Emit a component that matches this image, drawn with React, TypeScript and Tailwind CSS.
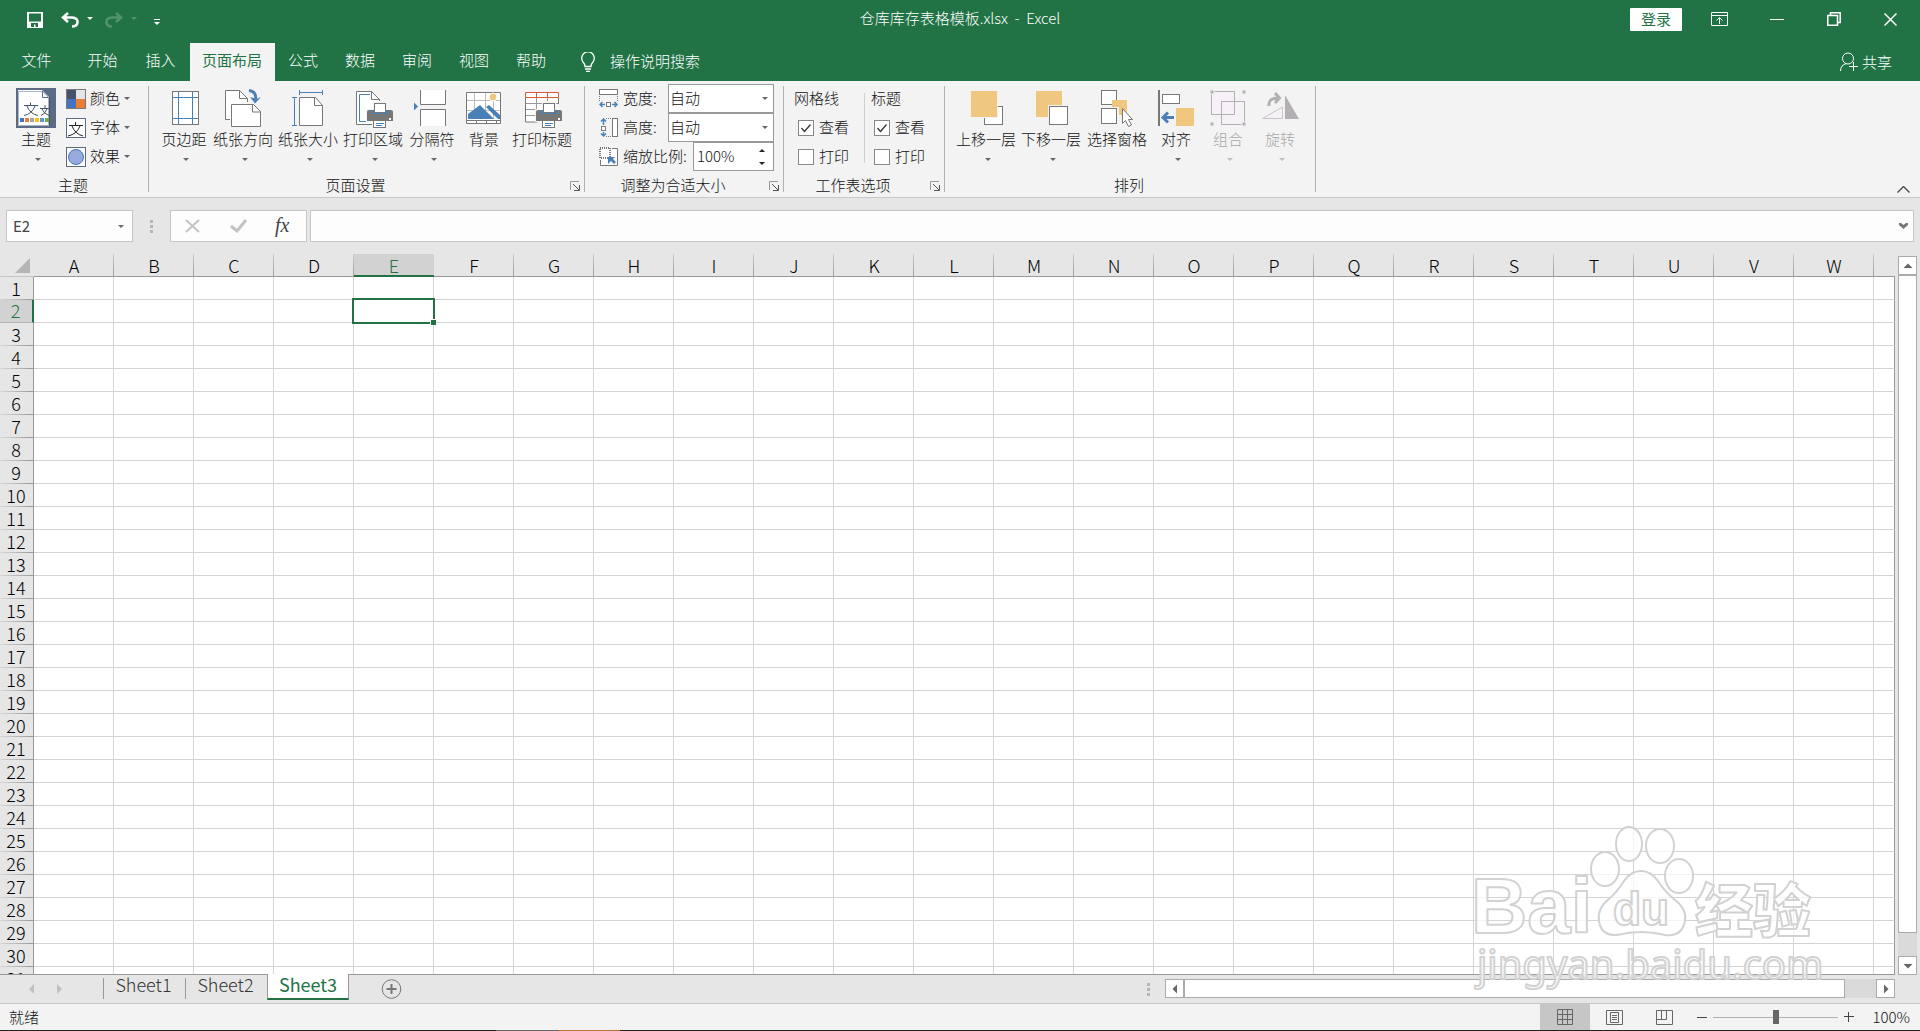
import React, { useState } from 'react'

type IconProps = { children: React.ReactNode, size?: string, view?: string }

const Icon = ({ children, size = 'h-10 w-10', view = '0 0 40 40' }: IconProps) => (
  <svg className={`${size} shrink-0`} viewBox={view} fill="none" stroke="#777" aria-hidden="true">{children}</svg>
)

const Caret = ({ className = 'text-[#666]' }: { className?: string }) => (
  <svg className={`h-[3px] w-[6px] shrink-0 ${className}`} viewBox="0 0 6 3" aria-hidden="true">
    <path d="M0 0h6L3 3z" fill="currentColor" />
  </svg>
)

const Printer = () => (
  <g>
    <path d="M20 13h14v8h7v13h-6v6H19v-6h-6V21h7z" fill="#f3f3f3" stroke="none" />
    <path d="M16 22h22a2 2 0 0 1 2 2v9H14v-9a2 2 0 0 1 2-2z" fill="#777" stroke="none" />
    <rect x="21.5" y="15.5" width="11" height="9" fill="#fff" />
    <path d="M19 22h2v3h12v-3h2v4H19z" fill="#4a80b8" stroke="none" />
    <rect x="20.5" y="32.5" width="12" height="7" fill="#fff" />
    <path d="M23 35.5h8M23 37.5h6" stroke="#4a80b8" />
    <path d="M36 30h2v2h-2z" fill="#fff" stroke="none" />
  </g>
)

const ThemeIcon = () => (
  <Icon>
    <rect x="1" y="1" width="38" height="38" fill="#fff" stroke="#5b6b86" strokeWidth="2" />
    <path d="M26 2h12v36h-5V9z" fill="#5b6b86" stroke="none" />
    <path d="M2.5 37.5v-34h24l6 6v28z" fill="#fff" stroke="#a9b6c9" />
    <path d="M26.5 3v6.5h6" stroke="#5b6b86" />
    <path d="M33.5 9v29" stroke="#44546a" />
    <path d="M14.5 14.5v3M8 17.5h14M11 18q3 8 11 9.5M19 18q-3 8-11 9.5M29 17v3M24 20.5h9M26 21q2 5 7 6.5M31 21q-2 5-6 6.5" stroke="#44546a" />
    <g stroke="none">
      <path d="M4 30h4v4H4z" fill="#4472c4" />
      <path d="M9 30h4v4H9z" fill="#ed7d31" />
      <path d="M14 30h4v4h-4z" fill="#a5a5a5" />
      <path d="M19 30h4v4h-4z" fill="#ffc000" />
      <path d="M24 30h4v4h-4z" fill="#5b9bd5" />
      <path d="M29 30h4v4h-4z" fill="#70ad47" />
    </g>
  </Icon>
)

const MarginsIcon = () => (
  <Icon>
    <rect x="8.5" y="3.5" width="26" height="33" fill="#fff" />
    <path d="M14.5 4v32M28.5 4v32M9 9.5h25M9 30.5h25" stroke="#4a80b8" />
  </Icon>
)

const OrientationIcon = () => (
  <Icon>
    <path d="M7 31.5H2.5v-29h14l8 8V14" fill="#fff" />
    <path d="M7 31V15h17v-4h-8V3H3v28z" fill="#fff" stroke="none" />
    <path d="M16.5 2.5v8h8" />
    <path d="M8.5 16.5h22l7 7v15h-29z" fill="#fff" />
    <path d="M29.5 16.5v7.5h8" />
    <path d="M26 2.5q8 1 6.5 10" stroke="#4a80b8" strokeWidth="3" />
    <path d="M27 9l5 6.5L38 9l-4.5 2z" fill="#4a80b8" stroke="none" />
  </Icon>
)

const SizeIcon = () => (
  <Icon>
    <path d="M11.5 9.5h16l7 8v20h-23z" fill="#fff" />
    <path d="M26.5 9.5v8h8" />
    <path d="M11.5 2v5M34.5 2v5M11 4.5h24M4 9.5h5M4 37.5h5M6.5 9v29" stroke="#4a80b8" />
  </Icon>
)

const PrintAreaIcon = () => (
  <Icon>
    <path d="M3.5 3.5h15l8 8v25h-23z" fill="#fff" />
    <path d="M18.5 3.5v8h8" />
    <path d="M17 6.5H6.5v27H15" stroke="#4a80b8" />
    <Printer />
  </Icon>
)

const BreaksIcon = () => (
  <Icon>
    <path d="M8.5 2v14.5h25V2M8.5 38V21.5h25V38" fill="#fff" />
    <path d="M2 14.5v8l4-4z" fill="#4a80b8" stroke="none" />
  </Icon>
)

const BackgroundIcon = () => (
  <Icon>
    <path d="M2.5 4.5h34v31h-34z" fill="#fff" />
    <path d="M3 12.5h33M3 22.5h33M10.5 5v26M21.5 5v26M29.5 5v26" stroke="#bbb" />
    <circle cx="29" cy="9" r="4" fill="#efc77e" stroke="#fff" />
    <path d="M4 31v-5l12-9L30 31zM22 19l3-2 11 10v4h-2z" fill="#4a80b8" stroke="none" />
    <path d="M2 32.5h35M12.5 33v2M22.5 33v2M32.5 33v2" />
  </Icon>
)

const PrintTitlesIcon = () => (
  <Icon>
    <path d="M3.5 10v24h12M36.5 10v6" fill="#fff" />
    <path d="M4 10h32v6H22v17H4z" fill="#fff" stroke="none" />
    <path d="M4 15.5h32M4 21.5h16M4 27.5h11M14.5 10v22M25.5 10v4" stroke="#999" />
    <path d="M3.5 4.5h33v5h-33zM14.5 4v6M25.5 4v6" stroke="#d8593a" fill="#fff" />
    <Printer />
  </Icon>
)

const ForwardIcon = () => (
  <Icon>
    <rect x="18.5" y="18.5" width="18" height="18" fill="#fff" />
    <path d="M4 2h28v28H4z" fill="#f3f3f3" stroke="none" />
    <path d="M5 3h26v26H5z" fill="#efc77e" stroke="none" />
  </Icon>
)

const BackwardIcon = () => (
  <Icon>
    <path d="M5 3h26v26H5z" fill="#efc77e" stroke="none" />
    <rect x="17" y="17" width="21" height="21" fill="#f3f3f3" stroke="none" />
    <rect x="18.5" y="18.5" width="18" height="18" fill="#fff" />
  </Icon>
)

const SelectionIcon = () => (
  <Icon>
    <rect x="4.5" y="2.5" width="15" height="14" fill="#fff" />
    <path d="M15 12h15v15H15z" fill="#efc77e" stroke="none" />
    <rect x="3" y="19" width="19" height="19" fill="#f3f3f3" stroke="none" />
    <rect x="4.5" y="20.5" width="15" height="15" fill="#fff" />
    <path d="M25.5 20.5v15l3-3 3 6 3-1.5-3-5.5h4z" fill="#fff" />
  </Icon>
)

const AlignIcon = () => (
  <Icon>
    <path d="M3 2v36" strokeWidth="2" />
    <rect x="6.5" y="6.5" width="17" height="9" fill="#fff" />
    <path d="M20 20h18v18H20z" fill="#efc77e" stroke="none" />
    <path d="M18 29.5H8M12 24.5l-5 5 5 5" stroke="#4a80b8" strokeWidth="3" />
  </Icon>
)

const GroupIcon = () => (
  <Icon>
    <g stroke="#b3b0b3" fill="#f6f1f6">
      <rect x="3.5" y="3.5" width="23" height="23" />
      <rect x="13.5" y="13.5" width="23" height="23" />
      <path d="M26.5 13v13.5H13" fill="none" />
    </g>
    <path d="M2 2h4v4H2zM34 2h4v4h-4zM2 34h4v4H2zM34 34h4v4h-4z" fill="#b3b0b3" stroke="#f3f3f3" />
  </Icon>
)

const RotateIcon = () => (
  <Icon>
    <path d="M25 7v24h14z" fill="#b3b0b3" stroke="none" />
    <path d="M22.5 19v11.5H2.5z" fill="#f6f1f6" stroke="#c9c4c9" />
    <path d="M9 18q-1-8 9-8M15 5l4.5 5-4.5 5" stroke="#b3b0b3" strokeWidth="3" />
  </Icon>
)

const pageSetup = [
  { label: '页边距', icon: <MarginsIcon />, width: 'w-[54px]', menu: true },
  { label: '纸张方向', icon: <OrientationIcon />, width: 'w-[64px]', menu: true },
  { label: '纸张大小', icon: <SizeIcon />, width: 'w-[66px]', menu: true },
  { label: '打印区域', icon: <PrintAreaIcon />, width: 'w-[64px]', menu: true },
  { label: '分隔符', icon: <BreaksIcon />, width: 'w-[54px]', menu: true },
  { label: '背景', icon: <BackgroundIcon />, width: 'w-[50px]' },
  { label: '打印标题', icon: <PrintTitlesIcon />, width: 'w-[66px]' },
]

const arrange = [
  { label: '上移一层', icon: <ForwardIcon />, width: 'w-[66px]', menu: true },
  { label: '下移一层', icon: <BackwardIcon />, width: 'w-[64px]', menu: true },
  { label: '选择窗格', icon: <SelectionIcon />, width: 'w-[68px]' },
  { label: '对齐', icon: <AlignIcon />, width: 'w-[50px]', menu: true },
  { label: '组合', icon: <GroupIcon />, width: 'w-[54px]', menu: true, disabled: true },
  { label: '旋转', icon: <RotateIcon />, width: 'w-[50px]', menu: true, disabled: true },
]

type BigButtonProps = { label: string, icon: React.ReactNode, width: string, menu?: boolean, disabled?: boolean }

const BigButton = ({ label, icon, width, menu, disabled }: BigButtonProps) => (
  <button disabled={disabled} className={`${width} flex flex-col items-center pt-1 whitespace-nowrap ${disabled ? 'text-[#a8a8a8]' : 'text-[#111]'}`}>
    {icon}
    <span className="h-6 leading-[22px]">{label}</span>
    {menu && <span className="pt-[6px] pl-1"><Caret className={disabled ? 'text-[#c0c0c0]' : 'text-[#666]'} /></span>}
  </button>
)

type GroupProps = { title: string, width: string, launcher?: boolean, children: React.ReactNode }

const Group = ({ title, width, launcher, children }: GroupProps) => (
  <section className={`${width} flex shrink-0 flex-col`}>
    <div className="flex h-[94px]">{children}</div>
    <div className="flex h-5 items-center">
      <h2 className={`flex-1 text-center leading-5 ${launcher ? 'pr-2' : 'pr-[2px]'}`}>{title}</h2>
      {launcher && (
        <button aria-label={title} className="mt-[2px] mr-1">
          <svg className="h-[10px] w-[10px]" viewBox="0 0 10 10" fill="none" stroke="#555" aria-hidden="true">
            <path d="M.5 9V.5H9" stroke="#999" />
            <path d="M3 3l6 6M9.5 4v5.5H4" />
          </svg>
        </button>
      )}
    </div>
  </section>
)

const Divider = () => <div className="my-[5px] w-px shrink-0 bg-[#b1b1b1]" />

const themeItems = [
  {
    label: '颜色',
    icon: (
      <Icon size="h-5 w-5" view="0 0 20 20">
        <g stroke="none">
          <path d="M1 1h9v9H1z" fill="#44546a" /><path d="M10 1h9v9h-9z" fill="#e7e6e6" />
          <path d="M1 10h9v9H1z" fill="#4472c4" /><path d="M10 10h9v9h-9z" fill="#ed7d31" />
        </g>
        <rect x=".5" y=".5" width="19" height="19" />
      </Icon>
    ),
  },
  {
    label: '字体',
    icon: (
      <Icon size="h-5 w-5" view="0 0 20 20">
        <rect x=".5" y=".5" width="19" height="19" fill="#fff" stroke="#5b6b86" />
        <path d="M9.5 4v3M3 7.5h14M6 8q3 8 11 10M14 8q-3 8-12 10" stroke="#222" />
      </Icon>
    ),
  },
  {
    label: '效果',
    icon: (
      <Icon size="h-5 w-5" view="0 0 20 20">
        <rect x=".5" y=".5" width="19" height="19" fill="#fff" stroke="#5b6b86" />
        <circle cx="10" cy="10" r="7.5" fill="#98abdf" stroke="#4472c4" />
      </Icon>
    ),
  },
]

const FitIcon = ({ kind }: { kind: string }) => (
  <Icon size="h-5 w-5" view="0 0 20 20">
    {kind === 'width' && <>
      <rect x=".5" y=".5" width="18" height="5" fill="#fff" />
      <path d="M.5 7v5M18.5 7v5" strokeDasharray="1 1" />
      <rect x="7.5" y="13.5" width="4" height="4" fill="#fff" />
      <path d="M6 15.5H1M3.5 13L1 15.5 3.5 18M13 15.5h5M15.5 13l2.5 2.5-2.5 2.5" stroke="#4a80b8" strokeWidth="1.5" />
    </>}
    {kind === 'height' && <>
      <rect x="13.5" y=".5" width="5" height="18" fill="#fff" />
      <path d="M7 .5h5M7 18.5h5" strokeDasharray="1 1" />
      <rect x="2.5" y="8.5" width="4" height="4" fill="#fff" />
      <path d="M4.5 7V1M2 3.5L4.5 1 7 3.5M4.5 14v4M2 15.5L4.5 18 7 15.5" stroke="#4a80b8" strokeWidth="1.5" />
    </>}
    {kind === 'scale' && <>
      <path d="M1.5 13v5.5h17v-17H13" fill="#fff" />
      <rect x="1" y="1" width="10" height="10" fill="#fff" strokeWidth="2" strokeDasharray="1 1" />
      <path d="M9 10h7l-2 2 3 3-2 2-3-3-3 3z" fill="#4a80b8" stroke="none" />
    </>}
  </Icon>
)

const FitSelect = ({ id, label }: { id: string, label: string }) => (
  <div className="flex h-[29px] items-center">
    <FitIcon kind={id} />
    <label htmlFor={id} className="mb-[2px] ml-1 w-[45px]">{label}</label>
    <div className="relative">
      <select id={id} className="h-[29px] w-[106px] appearance-none border border-[#999] bg-white pr-4 pb-[2px] pl-px outline-none">
        <option>自动</option>
      </select>
      <span className="pointer-events-none absolute right-[6px] top-[13px]"><Caret /></span>
    </div>
  </div>
)

const SheetOption = ({ name, label, checked }: { name: string, label: string, checked: boolean }) => {
  const [on, setOn] = useState(checked)
  return (
    <label htmlFor={name} className="flex h-[29px] items-center gap-[5px]">
      <span className="relative h-4 w-4">
        <input id={name} type="checkbox" checked={on} onChange={() => setOn(!on)} className="block h-4 w-4 appearance-none border border-[#888] bg-white" />
        {on && (
          <svg className="pointer-events-none absolute inset-0 h-4 w-4" viewBox="0 0 16 16" fill="none" stroke="#333" aria-hidden="true">
            <path d="M3.5 8l3 3.5 6-7" strokeWidth="1.3" />
          </svg>
        )}
      </span>
      <span className="mb-[2px]">{label}</span>
    </label>
  )
}

const tabs = [
  { label: '文件', width: 'w-[74px]' },
  { label: '开始', width: 'w-[58px]' },
  { label: '插入', width: 'w-[58px]' },
  { label: '页面布局', width: 'w-[85px]', active: true },
  { label: '公式', width: 'w-[57px]' },
  { label: '数据', width: 'w-[57px]' },
  { label: '审阅', width: 'w-[57px]' },
  { label: '视图', width: 'w-[57px]' },
  { label: '帮助', width: 'w-[57px]' },
]

const TitleBar = () => (
  <header className="grid h-[39px] shrink-0 grid-cols-[1fr_auto_1fr] items-start text-white">
    <div className="flex h-10 items-center pl-[27px]">
      <button aria-label="保存">
        <svg className="h-4 w-4" viewBox="0 0 16 16" aria-hidden="true">
          <path fillRule="evenodd" fill="#fff" d="M0 0h16v16H0zM2 1.5v8h12v-8zM4 11v4h3v-2.5h1.5V15H11v-4z" />
        </svg>
      </button>
      <button aria-label="撤消" className="ml-[18px]">
        <svg className="h-4 w-[18px]" viewBox="0 0 18 16" fill="none" stroke="#fff" strokeWidth="2.5" aria-hidden="true">
          <path d="M7 1L2 5.5l5 4.5M2 5.5h9q6 .5 5.5 5Q16 14.5 11 14.5" />
        </svg>
      </button>
      <button aria-label="撤消选项" className="ml-2 pb-1"><Caret className="text-white" /></button>
      <button aria-label="恢复" className="ml-3">
        <svg className="h-4 w-[18px]" viewBox="0 0 18 16" fill="none" stroke="#52936f" strokeWidth="2.5" aria-hidden="true">
          <path d="M11 1l5 4.5-5 4.5M16 5.5H7q-6 .5-5.5 5Q2 14.5 7 14.5" />
        </svg>
      </button>
      <button aria-label="恢复选项" className="ml-2 pb-1"><Caret className="text-[#52936f]" /></button>
      <button aria-label="自定义快速访问工具栏" className="ml-[17px] flex flex-col items-center gap-[2px] pt-1">
        <span className="h-px w-[6px] bg-white" />
        <Caret className="text-white" />
      </button>
    </div>
    <h1 className="whitespace-pre leading-9">仓库库存表格模板.xlsx  -  Excel</h1>
    <div className="flex h-[38px] items-center justify-end pr-px">
      <button className="mr-[9px] h-[23px] w-[52px] rounded-[1px] bg-white pb-[2px] leading-[21px] font-normal text-[#217346]">登录</button>
      <button aria-label="功能区显示选项" className="flex w-[57px] justify-center">
        <svg className="h-[14px] w-[17px]" viewBox="0 0 17 14" fill="none" stroke="#fff" aria-hidden="true">
          <path d="M.5.5h16v13H.5zM1 3.5h15M8.5 12V6M5.5 8.500l3-3 3 3" />
        </svg>
      </button>
      <button aria-label="最小化" className="flex w-[57px] justify-center"><span className="h-px w-[14px] bg-white" /></button>
      <button aria-label="向下还原" className="flex w-[57px] justify-center">
        <svg className="h-[14px] w-[14px]" viewBox="0 0 14 14" fill="none" stroke="#fff" aria-hidden="true">
          <path d="M.8 3.5h9.7v9.7H.8zM3.5 3V.8h9.7v9.7H11" strokeWidth="1.5" />
        </svg>
      </button>
      <button aria-label="关闭" className="flex w-[57px] justify-center">
        <svg className="h-[13px] w-[13px]" viewBox="0 0 13 13" fill="none" stroke="#fff" strokeWidth="1.5" aria-hidden="true">
          <path d="M.5.5l12 12M12.5.5l-12 12" />
        </svg>
      </button>
    </div>
  </header>
)

const TabBar = () => (
  <nav className="flex h-[42px] shrink-0 items-end text-white">
    {tabs.map((tab) => (
      <button key={tab.label} className={`${tab.width} h-[38px] pr-px pb-1 ${tab.active ? 'bg-[#f3f3f3] font-normal text-[#217346]' : ''}`}>{tab.label}</button>
    ))}
    <button className="ml-5 flex h-[38px] items-center gap-[14px]">
      <svg className="h-5 w-4" viewBox="0 0 16 20" fill="none" stroke="#fff" aria-hidden="true">
        <path d="M5 14.5q0-2.5-2-4.5A6.3 6.3 0 1 1 13 10q-2 2-2 4.5zM5 17h6M6 19.300h4" strokeWidth="1.3" />
      </svg>
      <span className="mb-[2px]">操作说明搜索</span>
    </button>
    <button className="mr-[28px] ml-auto flex h-[38px] items-center gap-1">
      <svg className="h-5 w-[18px]" viewBox="0 0 18 20" fill="none" stroke="#fff" aria-hidden="true">
        <circle cx="8" cy="6.5" r="5.5" />
        <path d="M.5 19q0-6 6-7.5M9 14.5h9M13.5 10v9" />
      </svg>
      共享
    </button>
  </nav>
)

const Ribbon = () => (
  <div className="flex h-[117px] shrink-0 border-b border-[#c8c8c8] bg-[#f3f3f3]">
    <Group title="主题" width="w-[148px]">
      <div className="flex pt-[3px] pl-[10px]">
        <BigButton label="主题" icon={<ThemeIcon />} width="w-[52px]" menu />
        <div className="ml-1">
          {themeItems.map((item) => (
            <button key={item.label} className="flex h-[29px] items-center">
              {item.icon}
              <span className="mr-1 mb-[2px] ml-1 leading-5">{item.label}</span>
              <Caret />
            </button>
          ))}
        </div>
      </div>
    </Group>
    <Divider />
    <Group title="页面设置" width="w-[435px]" launcher>
      <div className="flex pt-[3px] pl-2">
        {pageSetup.map((item) => <BigButton key={item.label} {...item} />)}
      </div>
    </Group>
    <Divider />
    <Group title="调整为合适大小" width="w-[198px]" launcher>
      <div className="pt-[3px] pl-[14px]">
        <FitSelect id="width" label="宽度:" />
        <FitSelect id="height" label="高度:" />
        <div className="flex h-[29px] items-center">
          <FitIcon kind="scale" />
          <label htmlFor="scale" className="mb-[2px] ml-1 w-[70px]">缩放比例:</label>
          <div className="flex h-[29px] w-[81px] border border-[#999] bg-white">
            <input id="scale" defaultValue="100%" className="w-[58px] pb-px pl-[3px] outline-none" />
            <div className="flex w-5 flex-col items-center justify-center gap-[10px]">
              <button aria-label="增大" className="rotate-180"><Caret className="block text-[#222]" /></button>
              <button aria-label="减小"><Caret className="block text-[#222]" /></button>
            </div>
          </div>
        </div>
      </div>
    </Group>
    <Divider />
    <Group title="工作表选项" width="w-[160px]" launcher>
      <fieldset className="w-20 pt-[3px] pl-[10px]">
        <h3 className="h-[29px] leading-[28px]">网格线</h3>
        <div className="pl-1">
          <SheetOption name="grid-view" label="查看" checked />
          <SheetOption name="grid-print" label="打印" checked={false} />
        </div>
      </fieldset>
      <div className="mt-3 mb-3 w-px bg-[#d0d0d0]" />
      <fieldset className="pt-[3px] pl-[6px]">
        <h3 className="h-[29px] leading-[28px]">标题</h3>
        <div className="pl-[3px]">
          <SheetOption name="head-view" label="查看" checked />
          <SheetOption name="head-print" label="打印" checked={false} />
        </div>
      </fieldset>
    </Group>
    <Divider />
    <Group title="排列" width="w-[370px]">
      <div className="flex pt-[3px] pl-2">
        {arrange.map((item) => <BigButton key={item.label} {...item} />)}
      </div>
    </Group>
    <Divider />
    <button aria-label="折叠功能区" className="mt-auto mr-[10px] mb-1 ml-auto">
      <svg className="h-[7px] w-[13px]" viewBox="0 0 13 7" fill="none" stroke="#444" aria-hidden="true"><path d="M.5 6.5l6-6 6 6" strokeWidth="1.3" /></svg>
    </button>
  </div>
)

const FormulaBar = () => (
  <div className="flex h-[52px] shrink-0 pt-3 pr-[6px] pl-[6px]">
    <div className="flex h-8 w-[127px] items-center border border-[#c6c6c6] bg-[#fdfdfd] pr-2">
      <input aria-label="名称框" defaultValue="E2" className="w-full min-w-0 pl-[6px] font-normal text-[#444] outline-none" />
      <Caret />
    </div>
    <div className="flex h-8 w-[37px] flex-col items-center justify-center gap-[2px]">
      <span className="h-[3px] w-[3px] bg-[#b5b5b5]" />
      <span className="h-[3px] w-[3px] bg-[#b5b5b5]" />
      <span className="h-[3px] w-[3px] bg-[#b5b5b5]" />
    </div>
    <div className="flex h-8 w-[137px] items-center border border-[#c6c6c6] bg-[#fdfdfd] pl-[14px]">
      <button aria-label="取消">
        <svg className="h-[14px] w-[15px]" viewBox="0 0 15 14" fill="none" stroke="#c3c3c3" strokeWidth="2" aria-hidden="true"><path d="M1 1l13 12M14 1L1 13" /></svg>
      </button>
      <button aria-label="输入" className="ml-[30px]">
        <svg className="h-[14px] w-[17px]" viewBox="0 0 17 14" fill="none" stroke="#c3c3c3" strokeWidth="3" aria-hidden="true"><path d="M1 7l6 5 9-11" /></svg>
      </button>
      <button aria-label="插入函数" className="ml-7 pb-[2px] font-['Liberation_Serif',serif] text-[20px] font-normal italic text-[#444]">fx</button>
    </div>
    <div className="ml-[3px] flex h-8 flex-1 items-center border border-[#c6c6c6] bg-[#fdfdfd] pr-[5px]">
      <input aria-label="编辑栏" className="h-full flex-1 px-2 outline-none" />
      <svg className="h-[6px] w-[9px]" viewBox="0 0 9 6" aria-hidden="true"><path d="M0 0h2l2.5 2L7 0h2v2L4.5 6 0 2z" fill="#777" /></svg>
    </div>
  </div>
)

const columns = 'ABCDEFGHIJKLMNOPQRSTUVW'.split('')
const rows = Array.from({ length: 31 }, (_, i) => i + 1)

const Grid = () => (
  <div className="min-w-0 flex-1 overflow-hidden border-b border-[#999] pt-1">
    <table className="w-full table-fixed border-separate border-spacing-0 text-[18px] text-black">
      <thead>
        <tr className="h-[23px]">
          <th className="w-[34px] border-b border-[#c6c6c6] p-0">
            <svg className="ml-[15px] block h-[15px] w-[15px]" viewBox="0 0 15 15" aria-hidden="true"><path d="M15 0v15H0z" fill="#b5b5b5" /></svg>
          </th>
          {columns.map((col) => (
            <th key={col} scope="col" className={`w-20 p-0 leading-[20px] font-light ${col === 'E'
              ? 'border-b-2 border-[#217346] bg-[#d2d2d2] text-[#217346]'
              : 'border-b border-[#999] bg-[linear-gradient(#cccccc,#999999)] bg-[length:1px_100%] bg-right bg-no-repeat'}`}>{col}</th>
          ))}
          <th className="border-b border-[#999] p-0" />
        </tr>
      </thead>
      <tbody>
        {rows.map((row) => (
          <tr key={row} className="h-[23px]">
            <th scope="row" className={`p-0 pr-px pb-[2px] leading-[20px] font-light ${row === 2
              ? 'border-r-2 border-b border-r-[#217346] border-b-[#b5b5b5] bg-[#d2d2d2] text-[#217346]'
              : 'border-r border-[#999] bg-[linear-gradient(90deg,#d8d8d8,#999999)] bg-[length:100%_1px] bg-bottom bg-no-repeat'}`}>{row}</th>
            {columns.map((col) => (
              <td key={col} className="relative border-r border-b border-[#d4d4d4] bg-white p-0">
                {row === 2 && col === 'E' && (
                  <div className="absolute -top-[2px] -right-[2px] -bottom-[2px] -left-[2px] z-10 border-2 border-[#217346]">
                    <span className="absolute -right-[3px] -bottom-[3px] h-[6px] w-[6px] border-t border-l border-white bg-[#217346]" />
                  </div>
                )}
              </td>
            ))}
            <td className="border-r border-b border-[#d4d4d4] border-r-[#999] bg-white p-0" />
          </tr>
        ))}
      </tbody>
    </table>
  </div>
)

const Arrow = ({ d }: { d: string }) => (
  <svg className="h-[10px] w-[10px]" viewBox="0 0 10 10" fill="#666" aria-hidden="true"><path d={d} /></svg>
)

const VerticalScroll = () => (
  <div className="mt-[6px] mr-[3px] ml-[3px] flex w-[19px] flex-col bg-[#dadada]">
    <button aria-label="向上滚动" className="flex h-[19px] items-center justify-center border border-[#ababab] bg-white"><Arrow d="M5 2.5l4.5 4.5h-9z" /></button>
    <div className="flex-1 border border-[#ababab] bg-white" />
    <div className="h-[23px]" />
    <button aria-label="向下滚动" className="flex h-[19px] items-center justify-center border border-[#ababab] bg-white"><Arrow d="M5 7.5L.5 3h9z" /></button>
  </div>
)

const SheetTabs = () => (
  <div className="flex h-[28px] shrink-0 text-[18px] text-[#333]">
    <div className="flex w-[103px] items-center gap-[23px] pl-[29px]">
      <button aria-label="上一个工作表"><svg className="h-[10px] w-[5px]" viewBox="0 0 5 10" aria-hidden="true"><path d="M5 0v10L0 5z" fill="#c0c0c0" /></svg></button>
      <button aria-label="下一个工作表"><svg className="h-[10px] w-[5px]" viewBox="0 0 5 10" aria-hidden="true"><path d="M0 0v10l5-5z" fill="#c0c0c0" /></svg></button>
    </div>
    <button className="mt-[3px] flex h-[21px] w-[82px] items-start justify-center border-l border-[#999] pr-[2px] leading-[12px]">Sheet1</button>
    <button className="mt-[3px] flex h-[21px] w-[82px] items-start justify-center border-l border-[#999] pr-[2px] leading-[12px]">Sheet2</button>
    <button className="relative -mt-px h-[26px] w-[82px] border-r border-b-2 border-l border-[#999] border-b-[#217346] bg-white pb-1 leading-5 font-normal text-[#217346]">Sheet3</button>
    <button aria-label="新工作表" className="ml-8 flex items-center">
      <svg className="h-5 w-[21px]" viewBox="0 0 21 20" fill="none" stroke="#777" aria-hidden="true">
        <circle cx="10.5" cy="10" r="9.3" />
        <path d="M5.5 10h10M10.5 5v10" strokeWidth="2" />
      </svg>
    </button>
    <div className="mr-[15px] ml-auto flex flex-col justify-center gap-[2px]">
      <span className="h-[3px] w-[3px] bg-[#b5b5b5]" />
      <span className="h-[3px] w-[3px] bg-[#b5b5b5]" />
      <span className="h-[3px] w-[3px] bg-[#b5b5b5]" />
    </div>
    <div className="mt-1 mr-[25px] flex h-[19px] w-[38%] bg-[#dadada]">
      <button aria-label="向左滚动" className="flex w-[19px] items-center justify-center border border-[#ababab] bg-white"><Arrow d="M2.5 5L7 .5v9z" /></button>
      <div className="flex-1 border border-[#ababab] bg-white" />
      <div className="w-[31px]" />
      <button aria-label="向右滚动" className="flex w-[19px] items-center justify-center border border-[#ababab] bg-white"><Arrow d="M7.5 5L3 .5v9z" /></button>
    </div>
  </div>
)

const StatusBar = () => (
  <footer className="flex h-[27px] shrink-0 items-center border-t border-[#c6c6c6] bg-[#f3f3f3]">
    <span className="mr-auto pl-[9px]">就绪</span>
    <button aria-label="普通" className="flex h-full w-[50px] items-center justify-center bg-[#c6c6c6]">
      <svg className="h-4 w-4" viewBox="0 0 16 16" fill="none" stroke="#666" aria-hidden="true"><path d="M.5.5h15v15H.5zM5.5 0v16M10.5 0v16M0 5.5h16M0 10.5h16" /></svg>
    </button>
    <button aria-label="页面布局视图" className="flex h-full w-[50px] items-center justify-center pr-px">
      <svg className="h-[15px] w-[17px]" viewBox="0 0 17 15" fill="none" stroke="#666" aria-hidden="true"><path d="M.5.5h16v14H.5zM4.5 2.5h8v10h-8zM6 5.5h5M6 7.5h5M6 9.5h5" /></svg>
    </button>
    <button aria-label="分页预览" className="flex h-full w-[50px] items-center justify-center pr-px">
      <svg className="h-[15px] w-[17px]" viewBox="0 0 17 15" fill="none" stroke="#666" aria-hidden="true"><path d="M.5.5h16v14H.5zM.5 9.5h10v-9M5.5 1v8" /></svg>
    </button>
    <button aria-label="缩小" className="ml-[7px] h-[10px] w-[10px]"><span className="block h-px w-[10px] bg-[#444]" /></button>
    <input
      type="range"
      aria-label="显示比例"
      defaultValue="50"
      className="mr-[6px] ml-[6px] h-[14px] w-[125px] appearance-none bg-[linear-gradient(#b1b1b1,#b1b1b1)] bg-[length:100%_1px] bg-center bg-no-repeat [&::-webkit-slider-thumb]:h-[14px] [&::-webkit-slider-thumb]:w-[6px] [&::-webkit-slider-thumb]:appearance-none [&::-webkit-slider-thumb]:bg-[#666]"
    />
    <button aria-label="放大">
      <svg className="h-[10px] w-[10px]" viewBox="0 0 10 10" stroke="#444" aria-hidden="true"><path d="M0 4.5h10M4.5 0v10" /></svg>
    </button>
    <span className="w-[66px] pr-[10px] text-right">100%</span>
  </footer>
)

const Watermark = () => (
  <svg className="pointer-events-none absolute right-[80px] bottom-[36px] z-20 h-[170px] w-[370px]" viewBox="0 0 370 170" fill="#fff" fillOpacity=".75" stroke="#d2d2d2" strokeWidth="2" strokeLinejoin="round" aria-hidden="true">
    <text x="1" y="108" className="font-['Liberation_Sans',sans-serif] text-[78px] font-bold">Bai</text>
    <ellipse cx="135" cy="44" rx="14" ry="17" />
    <ellipse cx="159" cy="19" rx="13" ry="17" />
    <ellipse cx="190" cy="21" rx="14" ry="17" />
    <ellipse cx="209" cy="51" rx="14" ry="17" />
    <path d="M171 46q10 0 17 10 7 11 17 19 12 9 10 21-3 16-20 14-12-3-24-3t-24 3q-16 1-18-14-2-13 10-22 8-7 15-18 7-10 17-10z" />
    <text x="143" y="100" className="font-['Liberation_Sans',sans-serif] text-[46px] font-bold">du</text>
    <text x="225" y="107" className="font-['Noto_Sans_CJK_SC',sans-serif] text-[58px] font-black">经验</text>
    <text x="7" y="154" className="font-['Noto_Sans',sans-serif] text-[40px] font-normal">jingyan.baidu.com</text>
  </svg>
)

const App = () => {
  return (
    <div className="relative flex h-screen flex-col overflow-hidden bg-[#e6e6e6] font-['Noto_Sans_CJK_SC',sans-serif] text-[15px] leading-5 font-light text-[#111]">
      <div className="shrink-0 bg-[#217346]">
        <TitleBar />
        <TabBar />
      </div>
      <Ribbon />
      <FormulaBar />
      <main className="flex min-h-0 flex-1">
        <Grid />
        <VerticalScroll />
      </main>
      <SheetTabs />
      <StatusBar />
      <div className="flex h-px shrink-0 bg-[#222]">
        <span className="ml-[496px] w-[62px] bg-[#666]" />
        <span className="w-[62px] bg-[#c07030]" />
      </div>
      <Watermark />
    </div>
  )
}

export default App
